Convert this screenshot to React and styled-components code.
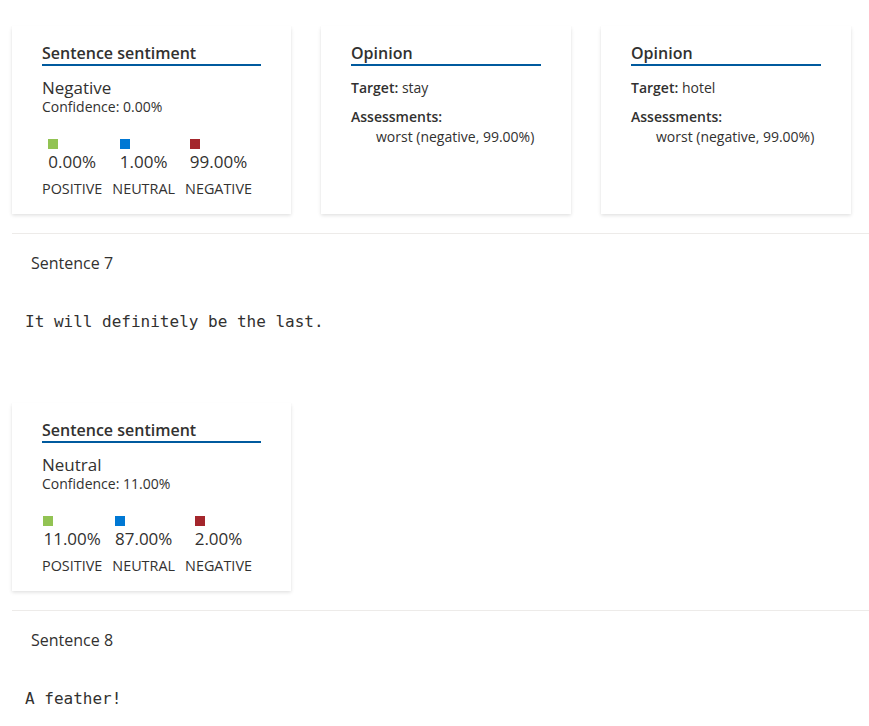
import React from "react";
import styled, { createGlobalStyle } from "styled-components";

const Global = createGlobalStyle`
  html, body { margin: 0; padding: 0; background: #ffffff; }
  body { font-family: "Segoe UI", "Open Sans", sans-serif; color: #323130; }
`;

const Page = styled.div`
  padding-top: 26px;
  width: 869px;
  overflow: hidden;
`;

const CardRow = styled.div`
  display: flex;
  align-items: stretch;
  gap: 30px;
  padding-left: 12px;
`;

const Card = styled.div`
  box-sizing: border-box;
  width: ${(p) => p.$w}px;
  background: #fff;
  padding: 17px 30px 17px;
  box-shadow: 0 1.6px 3.6px rgba(0, 0, 0, 0.13), 0 0.3px 0.9px rgba(0, 0, 0, 0.11);
`;

const CardTitle = styled.div`
  font-size: 16px;
  font-weight: 600;
  line-height: 22px;
  margin-top: -1px;
  color: #323130;
  border-bottom: 2px solid #005a9e;
`;

const Label = styled.div`
  font-size: 17px;
  line-height: 22px;
  margin-top: 11px;
  color: #323130;
`;

const Confidence = styled.div`
  font-size: 14px;
  line-height: 16px;
  color: #323130;
`;

const Metrics = styled.div`
  display: flex;
  gap: 10px;
  margin-top: 24px;
`;

const Metric = styled.div`
  display: flex;
  flex-direction: column;
  align-items: center;
`;

const ValueBlock = styled.div`
  display: flex;
  flex-direction: column;
  align-items: flex-start;
  gap: 2px;
`;

const Swatch = styled.div`
  width: 10px;
  height: 10px;
  background: ${(p) => p.$c};
`;

const Value = styled.div`
  font-size: 17px;
  line-height: 22px;
  color: #323130;
`;

const MetricName = styled.div`
  font-size: 14.4px;
  line-height: 16px;
  margin-top: 8px;
  text-transform: uppercase;
  color: #323130;
`;

const Field = styled.div`
  font-size: 14px;
  line-height: 20px;
  margin-top: ${(p) => p.$mt}px;
  color: #323130;
`;

const Key = styled.span`
  font-weight: 600;
`;

const Indent = styled.div`
  padding-left: 25px;
`;

const Divider = styled.div`
  height: 1px;
  background: #edebe9;
  margin: 19px 0 0 12px;
`;

const SentenceHead = styled.div`
  font-size: 16px;
  line-height: 22px;
  padding: 18px 0 0 31px;
  color: #323130;
`;

const Code = styled.div`
  font-family: "DejaVu Sans Mono", "Liberation Mono", monospace;
  font-size: 16px;
  line-height: 20px;
  padding: 38px 0 0 25px;
  color: #323130;
  white-space: pre;
`;

const Gap = styled.div`
  height: 71px;
`;

const COLORS = { positive: "#92c353", neutral: "#0078d4", negative: "#a4262c" };

function SentimentCard({ label, confidence, scores }) {
  return (
    <Card $w={279}>
      <CardTitle>Sentence sentiment</CardTitle>
      <Label>{label}</Label>
      <Confidence>Confidence: {confidence}</Confidence>
      <Metrics>
        {["positive", "neutral", "negative"].map((k) => (
          <Metric key={k}>
            <ValueBlock>
              <Swatch $c={COLORS[k]} />
              <Value>{scores[k]}</Value>
            </ValueBlock>
            <MetricName>{k}</MetricName>
          </Metric>
        ))}
      </Metrics>
    </Card>
  );
}

function OpinionCard({ target, assessment }) {
  return (
    <Card $w={250}>
      <CardTitle>Opinion</CardTitle>
      <Field $mt={12}>
        <Key>Target:</Key> {target}
      </Field>
      <Field $mt={9}>
        <Key>Assessments:</Key>
        <Indent>{assessment}</Indent>
      </Field>
    </Card>
  );
}

export default function App() {
  return (
    <Page>
      <Global />
      <CardRow>
        <SentimentCard
          label="Negative"
          confidence="0.00%"
          scores={{ positive: "0.00%", neutral: "1.00%", negative: "99.00%" }}
        />
        <OpinionCard target="stay" assessment="worst (negative, 99.00%)" />
        <OpinionCard target="hotel" assessment="worst (negative, 99.00%)" />
      </CardRow>
      <Divider />
      <SentenceHead>Sentence 7</SentenceHead>
      <Code>It will definitely be the last.</Code>
      <Gap />
      <CardRow>
        <SentimentCard
          label="Neutral"
          confidence="11.00%"
          scores={{ positive: "11.00%", neutral: "87.00%", negative: "2.00%" }}
        />
      </CardRow>
      <Divider />
      <SentenceHead>Sentence 8</SentenceHead>
      <Code>A feather!</Code>
    </Page>
  );
}
